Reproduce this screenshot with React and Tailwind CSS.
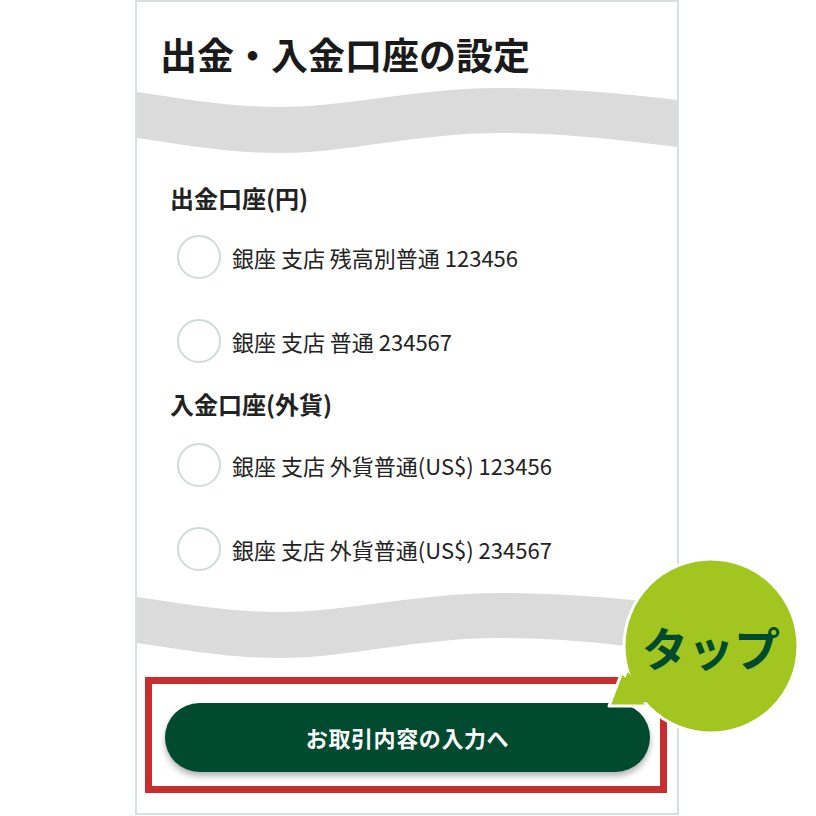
const font = { fontFamily: '"Noto Sans CJK JP", "Noto Sans", sans-serif' }

function Wave() {
  return (
    <svg className="block" width="540" height="70" viewBox="0 0 540 70">
      <path
        d="M0 6 C50 13 90 21 143 21 C210 21 280 2 363 2 C430 2 490 8 540 14 L540 61 C490 55 430 47 363 47 C280 47 210 67 143 67 C90 67 50 59 0 52 Z"
        fill="#dbdbdb"
      />
    </svg>
  )
}

function Radio({ label }) {
  return (
    <div className="h-[84px] flex items-center pl-[40px]">
      <span className="w-[44px] h-[44px] rounded-full border-2 border-[#cfdbd7] bg-white shrink-0" />
      <span className="ml-[11px] text-[22px] leading-[30px] text-[#222]">{label}</span>
    </div>
  )
}

function Bubble() {
  return (
    <div className="absolute left-[600px] top-[553px] w-[204px] h-[190px]">
      <svg width="204" height="190" viewBox="600 553 204 190" className="absolute inset-0">
        <path d="M622 672 L609 706 L652 706 Z" fill="#a2c61f" stroke="#fff" strokeWidth="3" strokeLinejoin="round" />
        <circle cx="711" cy="646" r="87" fill="#a2c61f" stroke="#fff" strokeWidth="3" />
        <path d="M628 672 L612 704 L652 702 Z" fill="#a2c61f" />
      </svg>
      <div className="absolute left-[111px] top-[93px] -translate-x-1/2 -translate-y-1/2 text-[46px] leading-none font-bold text-[#004a30] whitespace-nowrap">
        タップ
      </div>
    </div>
  )
}

export default function App() {
  return (
    <div className="relative w-[816px] h-[816px] bg-white overflow-hidden" style={font}>
      <div className="ml-[135px] w-[544px] h-[815px] border-2 border-[#d8dfdd] bg-white">
        {/* header */}
        <div className="h-[84px] pl-[23px] pt-[32px]">
          <h1 className="text-[37px] leading-[40px] font-bold text-[#1a1a1a]">出金・入金口座の設定</h1>
        </div>
        <Wave />

        {/* 出金口座 */}
        <h2 className="mt-[27px] pl-[33px] h-[32px] text-[24px] leading-[30px] font-bold text-[#222]">出金口座(円)</h2>
        <Radio label="銀座 支店 残高別普通 123456" />
        <Radio label="銀座 支店 普通 234567" />

        {/* 入金口座 */}
        <h2 className="mt-[6px] pl-[33px] h-[34px] text-[24px] leading-[30px] font-bold text-[#222]">入金口座(外貨)</h2>
        <Radio label="銀座 支店 外貨普通(US$) 123456" />
        <Radio label="銀座 支店 外貨普通(US$) 234567" />

        <Wave />

        {/* button highlight */}
        <div className="ml-[8px] mt-[16px] w-[522px] h-[116px] border-[7px] border-[#c82e2e] pl-[13px] pt-[19px]">
          <button className="w-[485px] h-[69px] rounded-full bg-[#004a30] text-white text-[22px] tracking-[0.6px] font-bold shadow-[0_4px_6px_rgba(0,0,0,0.3)]">
            お取引内容の入力へ
          </button>
        </div>
      </div>
      <Bubble />
    </div>
  )
}
